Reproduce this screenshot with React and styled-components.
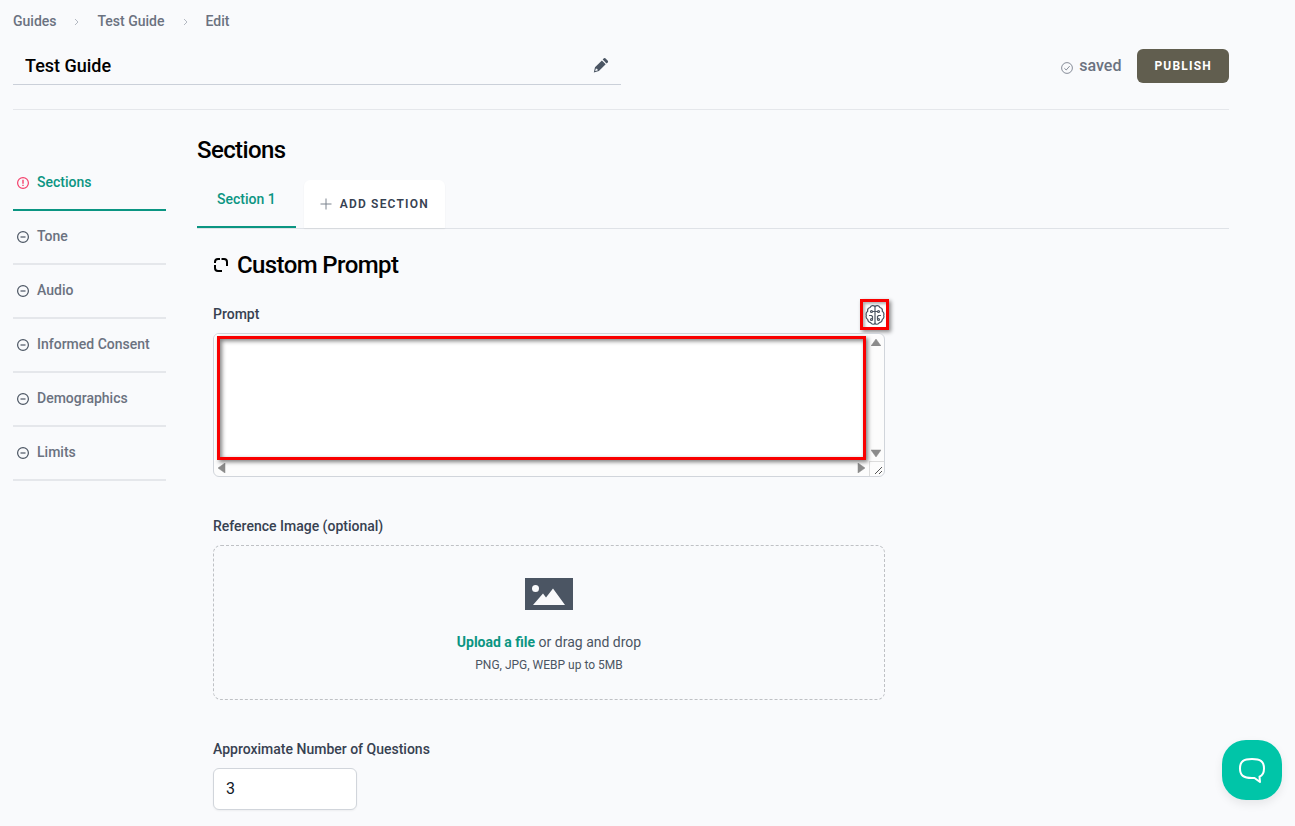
import React from "react";
import styled, { createGlobalStyle } from "styled-components";

const Global = createGlobalStyle`
  *, *::before, *::after { box-sizing: border-box; }
  body {
    margin: 0;
    background: #f9fafc;
    color: #000;
    font-family: Roboto, "Liberation Sans", sans-serif;
    font-size: 14px;
    line-height: 20px;
  }
  button, input, textarea { font: inherit; color: inherit; margin: 0; }
  h1, h2, p, ol, ul { margin: 0; padding: 0; }
  ol, ul { list-style: none; }
  svg { display: block; flex: none; }
`;

const Page = styled.div`
  padding: 11px 66px 16px 13px;
`;

const Crumbs = styled.ol`
  display: flex;
  align-items: center;
  gap: 18px;
  color: #6b7280;
  font-weight: 500;
  svg { margin-top: 2px; color: #b4b9c2; }
  li { display: flex; align-items: center; gap: 18px; }
  a { color: inherit; text-decoration: none; }
`;

const Header = styled.header`
  display: flex;
  align-items: center;
  justify-content: space-between;
  margin-top: 16px;
  padding-bottom: 24px;
  border-bottom: 1px solid #e5e7eb;
`;

const TitleField = styled.label`
  display: flex;
  align-items: center;
  width: 50%;
  height: 38px;
  padding: 0 12px;
  border-bottom: 1px solid #cbd0d9;
  color: #4b5563;
`;

const TitleInput = styled.input`
  flex: 1;
  min-width: 0;
  padding: 0;
  border: 0;
  background: transparent;
  color: #000;
  font-size: 18px;
  font-weight: 500;
  line-height: 28px;
`;

const Actions = styled.div`
  display: flex;
  align-items: center;
  gap: 16px;
`;

const Status = styled.span`
  display: flex;
  align-items: center;
  gap: 6px;
  color: #6b7280;
  font-size: 16px;
  font-weight: 500;
  svg { margin-top: 4px; }
`;

const PublishButton = styled.button`
  height: 34px;
  padding: 0 17px;
  border: 0;
  border-radius: 6px;
  background: #615e4f;
  color: #fff;
  font-size: 12px;
  font-weight: 700;
  letter-spacing: 1.2px;
  text-transform: uppercase;
`;

const Columns = styled.div`
  display: grid;
  grid-template-columns: 153px minmax(0, 1fr);
  gap: 31px;
`;

const SideList = styled.ul`
  padding-top: 47px;
`;

const SideLink = styled.a`
  display: flex;
  align-items: center;
  gap: 8px;
  height: 54px;
  padding: 0 4px 2px;
  border-bottom: 2px solid ${(p) => (p.$active ? "#0b9582" : "#e5e7eb")};
  color: ${(p) => (p.$active ? "#0b9582" : "#6b7280")};
  font-weight: 500;
  text-decoration: none;
  svg { margin-top: 2px; color: ${(p) => (p.$active ? "#f43f6b" : "#4b5563")}; }
`;

const Main = styled.main`
  padding-top: 24px;
`;

const Heading = styled.h1`
  font-size: 24px;
  font-weight: 500;
  line-height: 32px;
  letter-spacing: -0.6px;
`;

const Tabs = styled.div`
  display: flex;
  gap: 8px;
  margin-top: 14px;
  border-bottom: 1px solid #dfe2e7;
`;

const Tab = styled.button`
  height: 48px;
  padding: 0 20px 8px;
  border: 0;
  border-bottom: 2px solid #0b9582;
  background: transparent;
  color: #0b9582;
  font-weight: 500;
`;

const AddButton = styled.button`
  display: flex;
  align-items: center;
  gap: 8px;
  height: 48px;
  padding: 0 16px;
  border: 0;
  border-radius: 6px 6px 0 0;
  background: #fff;
  box-shadow: 0 1px 2px rgba(0, 0, 0, 0.05);
  color: #374151;
  font-size: 12px;
  font-weight: 600;
  letter-spacing: 1.2px;
  text-transform: uppercase;
`;

const Form = styled.form`
  max-width: 704px;
  padding: 20px 16px 0;
`;

const FormTitle = styled(Heading)`
  display: flex;
  align-items: center;
  gap: 8px;
`;

const Label = styled.label`
  display: block;
  color: #374151;
  font-weight: 500;
`;

const PromptBar = styled.div`
  display: flex;
  align-items: flex-start;
  justify-content: space-between;
  height: 31px;
  margin: 18px 0 3px;
  ${Label} { line-height: 30px; }
`;

const Field = styled.div`
  margin-top: 39px;
`;

const BrainButton = styled.button`
  display: grid;
  place-items: center;
  width: 29px;
  height: 31px;
  margin-right: -4px;
  padding: 0;
  border: 3px solid #f90000;
  background: #fff;
  box-shadow: 2px 2px 4px rgba(0, 0, 0, 0.45), inset 2px 2px 3px rgba(0, 0, 0, 0.3);
  color: #4b5563;
`;

const PromptBox = styled.div`
  position: relative;
  display: grid;
  grid-template: 127px 15px / minmax(0, 1fr) 15px;
  border: 1px solid #d1d5db;
  border-radius: 6px;
  background: #fcfcfc;
  overflow: hidden;
  color: #8b8b8b;
`;

const PromptInput = styled.textarea`
  width: 100%;
  height: 100%;
  padding: 8px 12px;
  border: 0;
  background: #fff;
  color: #111827;
  font-size: 16px;
  line-height: 24px;
  resize: none;
  overflow: hidden;
`;

const ScrollTrack = styled.div`
  display: flex;
  flex-direction: ${(p) => (p.$vertical ? "column" : "row")};
  align-items: ${(p) => (p.$vertical ? "center" : "flex-start")};
  justify-content: space-between;
  padding: ${(p) => (p.$vertical ? "4px 1px 4px 0" : "2px 4px")};
`;

const Corner = styled.div`
  display: grid;
  place-items: end;
  border-top: 1px solid #dcdcdc;
  border-left: 1px solid #dcdcdc;
  color: #555;
`;

const Highlight = styled.div`
  position: absolute;
  inset: 2px 18px 16px 3px;
  border: 3px solid #f90000;
  box-shadow: 2px 2px 4px rgba(0, 0, 0, 0.5), inset 2px 2px 4px rgba(0, 0, 0, 0.5);
  pointer-events: none;
`;

const DropZone = styled.div`
  display: flex;
  flex-direction: column;
  align-items: center;
  height: 155px;
  margin-top: 9px;
  padding-top: 32px;
  border: 1px dashed #bfc1c5;
  border-radius: 8px;
  color: #4b5563;
  p { margin-top: 22px; }
  small { margin-top: 5px; font-size: 12px; line-height: 16px; }
`;

const UploadLabel = styled.label`
  color: #0b9582;
  font-weight: 700;
  cursor: pointer;
`;

const FileInput = styled.input`
  position: absolute;
  width: 1px;
  height: 1px;
  opacity: 0;
`;

const NumberInput = styled.input`
  display: block;
  width: 144px;
  height: 42px;
  margin-top: 9px;
  padding: 0 12px 2px;
  border: 1px solid #d1d5db;
  border-radius: 6px;
  background: #fff;
  box-shadow: 0 1px 2px rgba(0, 0, 0, 0.05);
  color: #111827;
  font-size: 16px;
  line-height: 24px;
`;

const ChatButton = styled.button`
  position: fixed;
  right: 13px;
  bottom: 26px;
  display: grid;
  place-items: center;
  width: 60px;
  height: 60px;
  padding: 0;
  border: 0;
  border-radius: 24px;
  background: #00c5a8;
  box-shadow: 0 4px 10px rgba(0, 0, 0, 0.08);
  color: #fff;
`;

const Chevron = () => (
  <svg width="5" height="8" viewBox="0 0 5 8" fill="none" stroke="currentColor" aria-hidden="true">
    <path d="M1 1l3 3-3 3" />
  </svg>
);

const Pencil = () => (
  <svg width="16" height="18" viewBox="0 0 16 18" fill="currentColor" aria-hidden="true">
    <path d="M10.900 1.300a1 1 0 0 1 1.400 0l2.500 2.500a1 1 0 0 1 0 1.400l-1.300 1.300L9.700 2.600z" />
    <path fillRule="evenodd" d="M8.900 3.400l3.800 3.900-6.800 6.800L.8 15.400 2 10.300zM2.900 11.500l-.8 2.600 2.600-.7-.3-1.500z" />
  </svg>
);

const StatusIcon = ({ kind }) => (
  <svg width="12" height="12" viewBox="0 0 12 12" fill="none" stroke="currentColor" strokeWidth={kind === "check" ? 0.8 : 1.2} aria-hidden="true">
    <circle cx="6" cy="6" r="5.4" />
    {kind === "check" && <path d="M3.4 6.3l1.8 1.7 3.5-3.900" />}
    {kind === "minus" && <path d="M3.5 6h5" />}
    {kind === "alert" && <path d="M6 2.800v4M6 7.800v1.300" strokeWidth="1.400" />}
  </svg>
);

const Plus = () => (
  <svg width="12" height="12" viewBox="0 0 12 12" stroke="#7d848f" aria-hidden="true">
    <path d="M6 .5v11M.5 6h11" />
  </svg>
);

const Frame = () => (
  <svg width="16" height="16" viewBox="0 0 16 16" fill="none" stroke="currentColor" strokeWidth="2" aria-hidden="true">
    <path d="M7 2H5a3 3 0 0 0-3 3v1M8.500 2H11a3 3 0 0 1 3 3v4M2 8v3a3 3 0 0 0 3 3h4" />
  </svg>
);

const Brain = () => (
  <svg width="20" height="22" viewBox="0 0 20 22" fill="none" stroke="currentColor" strokeWidth="1.200" strokeLinecap="round" aria-hidden="true">
    <path d="M10 2.500C8.600 1 5.900 1.400 5.100 3.500 3.200 3.900 2.400 5.600 2.700 7.200 1.100 8.300.8 9.900 1.300 11.300c-.5 1.700 0 3.400 1.400 4.200.2 2 1.500 3 2.900 3.100C6.900 20.600 9 20.700 10 19.300" />
    <path d="M10 2.500c1.400-1.500 4.100-1.100 4.900 1 1.900.4 2.700 2.100 2.400 3.700 1.600 1.100 1.900 2.700 1.400 4.100.5 1.700 0 3.400-1.400 4.200-.2 2-1.500 3-2.900 3.100-1.300 2-3.400 2.100-4.400.7M10 2.500v16.800" />
    <path d="M7.500 7.500H10M10 7.500h2.500M4.500 11.500h2l1 1v2.500M15.500 11.500h-2l-1 1v2.500" />
    <circle cx="6.500" cy="7.500" r="1" />
    <circle cx="13.500" cy="7.500" r="1" />
    <circle cx="6.500" cy="15.500" r="1" />
    <circle cx="13.500" cy="15.500" r="1" />
  </svg>
);

const arrows = {
  up: "M5 1L10 8H0z",
  down: "M5 8L0 1h10z",
  left: "M0 5l7-5v10z",
  right: "M8 5L1 0v10z",
};

const Arrow = ({ dir }) => {
  const upright = dir === "up" || dir === "down";
  return (
    <svg width={upright ? 10 : 8} height={upright ? 8 : 10} fill="currentColor" stroke="currentColor" strokeLinejoin="round" strokeWidth="0.5" aria-hidden="true">
      <path d={arrows[dir]} />
    </svg>
  );
};

const Grip = () => (
  <svg width="10" height="10" stroke="currentColor" aria-hidden="true">
    <path d="M1 8l7-7M5 8l3-3" />
  </svg>
);

const Picture = () => (
  <svg width="48" height="32" viewBox="0 0 48 32" aria-hidden="true">
    <path fill="#4b5563" d="M0 0h48v32H0z" />
    <circle cx="10.500" cy="10.500" r="3.500" fill="#f9fafc" />
    <path fill="#f9fafc" d="M8 27l10-11.500 3 4L28 10.500 40 27z" />
  </svg>
);

const Bubble = () => (
  <svg width="26" height="26" viewBox="0 0 26 26" fill="none" stroke="currentColor" strokeWidth="2" strokeLinejoin="round" aria-hidden="true">
    <path d="M13 2C4.500 2 1 4.500 1 11.500S4.500 21 13 21h2.500l5.500 4-.5-5.300C23.800 18.500 25 16 25 11.500 25 4.500 21.500 2 13 2z" />
  </svg>
);

const sections = ["Sections", "Tone", "Audio", "Informed Consent", "Demographics", "Limits"];

export default function App() {
  return (
    <>
      <Global />
      <Page>
        <nav aria-label="Breadcrumb">
          <Crumbs>
            <li><a href="#guides">Guides</a></li>
            <li><Chevron /><a href="#guide">Test Guide</a></li>
            <li><Chevron /><a href="#edit">Edit</a></li>
          </Crumbs>
        </nav>
        <Header>
          <TitleField>
            <TitleInput aria-label="Guide title" defaultValue="Test Guide" />
            <Pencil />
          </TitleField>
          <Actions>
            <Status><StatusIcon kind="check" />saved</Status>
            <PublishButton type="button">Publish</PublishButton>
          </Actions>
        </Header>
        <Columns>
          <nav aria-label="Guide settings">
            <SideList>
              {sections.map((name, i) => (
                <li key={name}>
                  <SideLink href={"#" + name.toLowerCase().replace(" ", "-")} $active={i === 0}>
                    <StatusIcon kind={i === 0 ? "alert" : "minus"} />
                    {name}
                  </SideLink>
                </li>
              ))}
            </SideList>
          </nav>
          <Main>
            <Heading>Sections</Heading>
            <Tabs>
              <Tab type="button">Section 1</Tab>
              <AddButton type="button"><Plus />Add section</AddButton>
            </Tabs>
            <Form>
              <FormTitle as="h2"><Frame />Custom Prompt</FormTitle>
              <PromptBar>
                <Label htmlFor="prompt">Prompt</Label>
                <BrainButton type="button" aria-label="Generate prompt"><Brain /></BrainButton>
              </PromptBar>
              <PromptBox>
                <PromptInput id="prompt" />
                <ScrollTrack $vertical><Arrow dir="up" /><Arrow dir="down" /></ScrollTrack>
                <ScrollTrack><Arrow dir="left" /><Arrow dir="right" /></ScrollTrack>
                <Corner><Grip /></Corner>
                <Highlight />
              </PromptBox>
              <Field>
                <Label htmlFor="image">Reference Image (optional)</Label>
                <DropZone>
                  <Picture />
                  <p>
                    <UploadLabel htmlFor="image">Upload a file</UploadLabel> or drag and drop
                    <FileInput id="image" type="file" accept=".png,.jpg,.webp" />
                  </p>
                  <small>PNG, JPG, WEBP up to 5MB</small>
                </DropZone>
              </Field>
              <Field>
                <Label htmlFor="count">Approximate Number of Questions</Label>
                <NumberInput id="count" inputMode="numeric" defaultValue="3" />
              </Field>
            </Form>
          </Main>
        </Columns>
      </Page>
      <ChatButton type="button" aria-label="Open chat"><Bubble /></ChatButton>
    </>
  );
}
